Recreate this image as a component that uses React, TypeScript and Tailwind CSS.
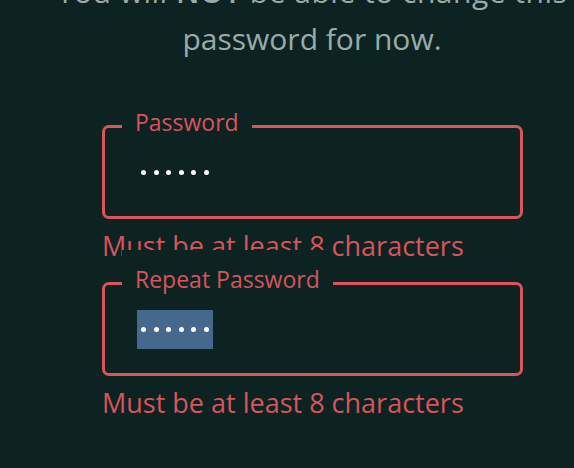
import React from 'react';

const font = { fontFamily: '"Open Sans", "Liberation Sans", sans-serif' };

type FieldProps = {
  label: string;
  selected?: boolean;
  error: string;
  className?: string;
};

const PasswordField: React.FC<FieldProps> = ({ label, selected, error, className }) => {
  return (
    <div className={className}>
      <div className="relative h-[94px] rounded-[7px] border-[3px] border-[#d9545b] pl-[32px] pt-[25px]">
        {/* legend sits over the top border and whatever lies above it */}
        <span className="absolute left-[17px] top-[-35px] bg-[#0d2322] px-[13px] pt-[14px] text-[23px] leading-[31px] text-[#d9545b]">
          {label}
        </span>
        <span
          className={`inline-flex h-[39px] items-center gap-[7.5px] px-[4px] ${
            selected ? 'bg-[#44698d]' : ''
          }`}
        >
          {Array.from({ length: 6 }).map((_, i) => (
            <span key={i} className="block h-[5px] w-[5px] rounded-full bg-white" />
          ))}
        </span>
      </div>
      <p className="mt-[8px] text-[27px] leading-[37px] text-[#d9545b]">{error}</p>
    </div>
  );
};

const App: React.FC = () => {
  return (
    <div className="h-[468px] w-[574px] overflow-hidden bg-[#0d2322]" style={font}>
      <p className="ml-[50px] mt-[-32px] w-[524px] whitespace-nowrap text-center text-[30px] leading-[47px] text-[#9aaba8]">
        <span className="tracking-[0.5px]">
          You will <span className="font-semibold">NOT</span> be able to change this
        </span>
        <br />
        password for now.
      </p>

      <div className="ml-[102px] mt-[63px] w-[421px]">
        <PasswordField label="Password" error="Must be at least 8 characters" />
        <PasswordField
          className="mt-[18px]"
          label="Repeat Password"
          selected
          error="Must be at least 8 characters"
        />
      </div>
    </div>
  );
};

export default App;
